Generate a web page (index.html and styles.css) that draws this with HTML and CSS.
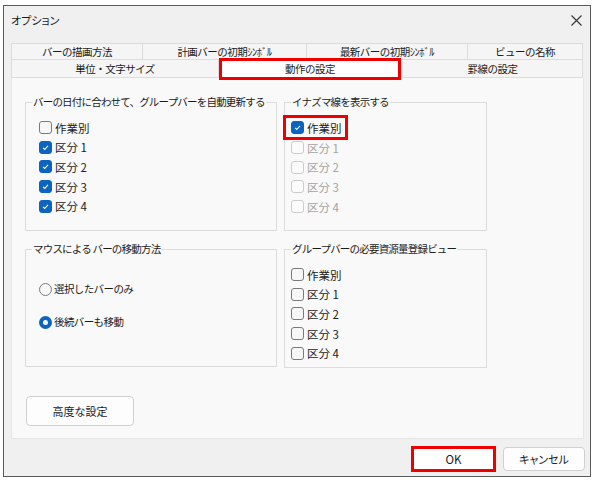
FILE: index.html
```html
<!DOCTYPE html>
<html lang="ja">
<head>
<meta charset="utf-8">
<title>オプション</title>
<link rel="stylesheet" href="styles.css">
</head>
<body>
<div class="window">
  <div class="titlebar">
    <span class="title">オプション</span>
    <svg class="close" width="11" height="11" viewBox="0 0 11 11"><path d="M0.5 0.5 L10.5 10.5 M10.5 0.5 L0.5 10.5" stroke="#333" stroke-width="1.1" fill="none"/></svg>
  </div>
  <div class="tabs">
    <div class="tabrow">
      <div class="tab t1">バーの描画方法</div>
      <div class="tab t2">計画バーの初期ｼﾝﾎﾞﾙ</div>
      <div class="tab t3">最新バーの初期ｼﾝﾎﾞﾙ</div>
      <div class="tab t4">ビューの名称</div>
    </div>
    <div class="tabrow row2">
      <div class="tab t5">単位・文字サイズ</div>
      <div class="tab t6 selected">動作の設定</div>
      <div class="tab t7">罫線の設定</div>
    </div>
  </div>
  <div class="panel">
    <div class="groups">
      <fieldset class="group left g1">
        <legend>バーの日付に合わせて、グループバーを自動更新する</legend>
        <div class="row"><span class="cb"></span><span>作業別</span></div>
        <div class="row"><span class="cb on"><svg viewBox="0 0 13 13"><path d="M3.6 6.9 L5.6 8.8 L9.5 4.6"/></svg></span><span>区分 1</span></div>
        <div class="row"><span class="cb on"><svg viewBox="0 0 13 13"><path d="M3.6 6.9 L5.6 8.8 L9.5 4.6"/></svg></span><span>区分 2</span></div>
        <div class="row"><span class="cb on"><svg viewBox="0 0 13 13"><path d="M3.6 6.9 L5.6 8.8 L9.5 4.6"/></svg></span><span>区分 3</span></div>
        <div class="row"><span class="cb on"><svg viewBox="0 0 13 13"><path d="M3.6 6.9 L5.6 8.8 L9.5 4.6"/></svg></span><span>区分 4</span></div>
      </fieldset>
      <fieldset class="group right g2">
        <legend>イナズマ線を表示する</legend>
        <div class="row hl"><span class="cb on"><svg viewBox="0 0 13 13"><path d="M3.6 6.9 L5.6 8.8 L9.5 4.6"/></svg></span><span>作業別</span></div>
        <div class="row dis"><span class="cb"></span><span>区分 1</span></div>
        <div class="row dis"><span class="cb"></span><span>区分 2</span></div>
        <div class="row dis"><span class="cb"></span><span>区分 3</span></div>
        <div class="row dis"><span class="cb"></span><span>区分 4</span></div>
      </fieldset>
      <fieldset class="group left g3">
        <legend>マウスによる バーの移動方法</legend>
        <div class="row radio-row"><span class="rb"></span><span>選択したバーのみ</span></div>
        <div class="row radio-row"><span class="rb on"></span><span>後続バーも移動</span></div>
      </fieldset>
      <fieldset class="group right g4">
        <legend>グループバーの必要資源量登録ビュー</legend>
        <div class="row"><span class="cb"></span><span>作業別</span></div>
        <div class="row"><span class="cb"></span><span>区分 1</span></div>
        <div class="row"><span class="cb"></span><span>区分 2</span></div>
        <div class="row"><span class="cb"></span><span>区分 3</span></div>
        <div class="row"><span class="cb"></span><span>区分 4</span></div>
      </fieldset>
    </div>
    <button class="btn adv">高度な設定</button>
  </div>
  <div class="footer">
    <button class="btn ok">OK</button>
    <button class="btn cancel">キャンセル</button>
  </div>
</div>
</body>
</html>
```
FILE: styles.css
```css
* { box-sizing: border-box; }
html, body { margin: 0; padding: 0; background: #ffffff; }
body {
  font-family: "Noto Sans CJK JP", "Noto Sans", sans-serif;
  font-size: 11px;
  color: #1b1b1b;
}
.window {
  margin: 5px 0 0 3px;
  width: 588px;
  height: 472px;
  border: 1px solid #5a5a5a;
  background: #f0f0f0;
  display: flex;
  flex-direction: column;
}
.titlebar {
  height: 28px;
  display: flex;
  align-items: center;
  justify-content: space-between;
  padding: 0 8px 0 7px;
  flex: none;
}
.title {
  font-size: 11px;
  line-height: 14px;
  font-feature-settings: "palt" 1;
}
.close { display: block; }
.tabs {
  margin: 9px 0 0 7px;
  width: 573px;
  flex: none;
}
.tabrow { display: flex; height: 17px; }
.tabrow.row2 { height: 18px; }
.tab {
  height: 100%;
  border: 1px solid #dcdcdc;
  border-left: none;
  background: #f5f5f5;
  display: flex;
  align-items: center;
  justify-content: center;
  line-height: 14px;
  font-size: 10.5px;
  letter-spacing: -0.5px;
  white-space: nowrap;
}
.tabrow .tab:first-child { border-left: 1px solid #dcdcdc; }
.row2 .tab { border-top: none; }
.t1 { width: 132px; }
.t2 { width: 164px; }
.t3 { width: 161px; }
.t4 { width: 115px; }
.t5 { width: 208px; }
.t6 { width: 184px; }
.t7 { width: 180px; }
.tab.selected {
  width: 182px;
  margin-right: 2px;
  height: 22px;
  margin-top: -2px;
  border: 3px solid #ee0000;
  background: #ffffff;
  position: relative;
  z-index: 1;
}
.panel {
  margin-left: 7px;
  width: 573px;
  height: 361px;
  background: #f9f9f9;
  border: 1px solid #e6e6e6;
  border-top: none;
  padding: 16px 0 0 13px;
  flex: none;
}
.groups {
  display: grid;
  grid-template-columns: 252px 203px;
  grid-template-rows: 137px 126px;
  column-gap: 7px;
  row-gap: 10px;
}
.group {
  margin: 0;
  min-width: 0;
  border: 1px solid #dcdcdc;
  padding: 8px 0 0 13px;
}
.group.right { padding-left: 6px; }
.group.right.g4 { height: 127px; }
.group legend {
  padding: 0 1px;
  line-height: 16px;
  font-size: 10.5px;
  letter-spacing: -0.8px;
  white-space: nowrap;
}
.group.left legend { margin-left: -7px; }
.row {
  height: 19.6px;
  display: flex;
  align-items: center;
  gap: 3px;
  line-height: 14px;
  font-size: 11.5px;
}
.row.dis { color: #a3a3a3; }
.cb {
  width: 13px;
  height: 13px;
  border: 1px solid #7a7a7a;
  border-radius: 3px;
  background: #f7f7f7;
  flex: none;
  display: block;
}
.row.dis .cb { border-color: #cccccc; background: #fbfbfb; }
.cb.on { background: #0a64c0; border-color: #0a64c0; }
.cb svg { display: block; width: 11px; height: 11px; }
.cb svg path { fill: none; stroke: #ffffff; stroke-width: 1.2; }
.row.hl {
  align-self: flex-start;
  width: 65px;
  height: 25px;
  border: 3px solid #ee0000;
  margin: -3px 0 -2px -8px;
  padding-left: 5px;
}
.g3 { padding-top: 22px; }
.radio-row {
  height: 20px;
  margin-bottom: 13px;
  gap: 2px;
  font-size: 10.5px;
  letter-spacing: -0.6px;
}
.rb {
  width: 13px;
  height: 13px;
  border-radius: 50%;
  border: 1px solid #7a7a7a;
  background: #f7f7f7;
  flex: none;
  display: block;
}
.rb.on {
  border: 4px solid #0a64c0;
  background: #ffffff;
}
.btn {
  font-family: "Noto Sans CJK JP", "Noto Sans", sans-serif;
  font-size: 11px;
  color: #1b1b1b;
  background: #fdfdfd;
  border: 1px solid #d0d0d0;
  border-radius: 4px;
  padding: 0;
  line-height: 14px;
  display: block;
}
.adv {
  width: 108px;
  height: 30px;
  margin-top: 29px;
  margin-left: 1px;
}
.footer {
  flex: none;
  display: flex;
  justify-content: flex-end;
  gap: 7px;
  padding: 7px 5px 0 0;
}
.ok {
  width: 85px;
  height: 26px;
  border: 3px solid #ee0000;
  border-radius: 0;
  background: #ffffff;
  font-size: 11.5px;
}
.cancel {
  width: 82px;
  height: 24px;
  margin-top: 1px;
  font-feature-settings: "palt" 1;
}
```
